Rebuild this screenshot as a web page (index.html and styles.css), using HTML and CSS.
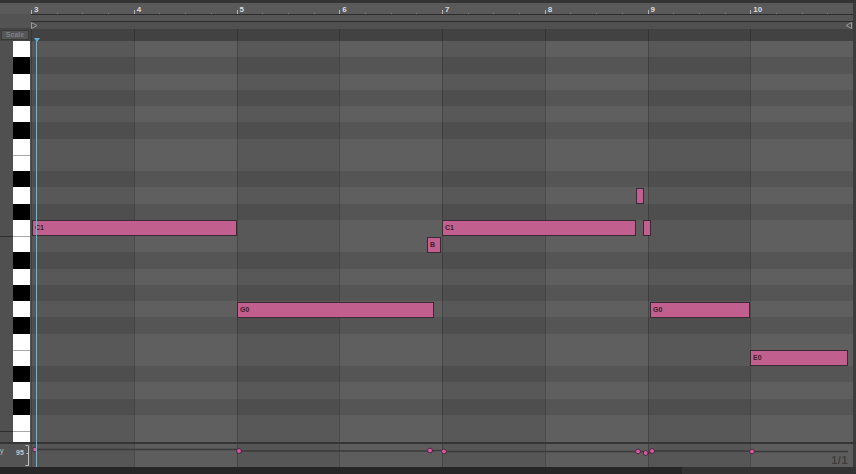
FILE: index.html
```html
<!DOCTYPE html>
<html>
<head>
<meta charset="utf-8">
<link rel="stylesheet" href="styles.css">
</head>
<body>
<div class="app">
  <div class="topbar"></div>
  <div class="header">
    <div class="hleft">
      <div class="hl-ruler"></div>
      <div class="hl-mid"></div>
      <div class="hl-scale"><span class="scale-btn">Scale</span></div>
    </div>
    <div class="hright">
      <div class="ruler">
        <div class="rbar"><span>3</span></div>
        <div class="rbar"><span>4</span></div>
        <div class="rbar"><span>5</span></div>
        <div class="rbar"><span>6</span></div>
        <div class="rbar"><span>7</span></div>
        <div class="rbar"><span>8</span></div>
        <div class="rbar"><span>9</span></div>
        <div class="rbar"><span>10</span></div>
      </div>
      <div class="loopbar"></div>
      <div class="markrow">
        <svg class="tri-l" width="7" height="7" viewBox="0 0 7 7"><path d="M0.5 0.5 L6 3.5 L0.5 6.5 Z" fill="none" stroke="#9a9a9a" stroke-width="1"/></svg>
        <svg class="tri-r" width="7" height="7" viewBox="0 0 7 7"><path d="M6.5 0.5 L1 3.5 L6.5 6.5 Z" fill="none" stroke="#9a9a9a" stroke-width="1"/></svg>
      </div>
      <div class="cols darkrow">
        <div class="c"></div><div class="c"></div><div class="c"></div><div class="c"></div>
        <div class="c"></div><div class="c"></div><div class="c"></div><div class="c"></div>
      </div>
    </div>
    <div class="hedge"></div>
  </div>

  <div class="main">
    <div class="keyscol">
      <div class="panel">
        <div class="pr"></div><div class="pr"></div><div class="pr"></div><div class="pr"></div><div class="pr"></div><div class="pr"></div>
        <div class="pr"></div><div class="pr"></div><div class="pr"></div><div class="pr"></div><div class="pr"></div><div class="pr"></div>
        <div class="pr oct"></div><div class="pr"></div><div class="pr"></div><div class="pr"></div><div class="pr"></div><div class="pr"></div>
        <div class="pr"></div><div class="pr"></div><div class="pr"></div><div class="pr"></div><div class="pr"></div><div class="pr"></div>
        <div class="pr oct"></div>
      </div>
      <div class="keys">
        <div class="k w"></div><div class="k b"></div><div class="k w"></div><div class="k b"></div><div class="k w"></div><div class="k b"></div>
        <div class="k w"></div><div class="k w sep"></div><div class="k b"></div><div class="k w"></div><div class="k b"></div><div class="k w"></div>
        <div class="k w sep"></div><div class="k b"></div><div class="k w"></div><div class="k b"></div><div class="k w"></div><div class="k b"></div>
        <div class="k w"></div><div class="k w sep"></div><div class="k b"></div><div class="k w"></div><div class="k b"></div><div class="k w"></div>
        <div class="k w sep"></div>
      </div>
      <div class="keygap"></div>
    </div>

    <div class="grid">
      <div class="rows">
        <div class="r w"></div><div class="r b"></div><div class="r w"></div><div class="r b"></div><div class="r w"></div><div class="r b"></div>
        <div class="r w"></div><div class="r w"></div><div class="r b"></div><div class="r w"></div><div class="r b"></div><div class="r w"></div>
        <div class="r w"></div><div class="r b"></div><div class="r w"></div><div class="r b"></div><div class="r w"></div><div class="r b"></div>
        <div class="r w"></div><div class="r w"></div><div class="r b"></div><div class="r w"></div><div class="r b"></div><div class="r w"></div>
        <div class="r w"></div>
      </div>
      <div class="cols overlay">
        <div class="c"></div><div class="c lt"></div><div class="c"></div><div class="c lt"></div>
        <div class="c"></div><div class="c lt"></div><div class="c"></div><div class="c lt"></div>
      </div>
      <div class="note" style="left:1px;top:179px;width:205px"><span>C1</span></div>
      <div class="note" style="left:206px;top:261px;width:197px"><span>G0</span></div>
      <div class="note" style="left:396px;top:196px;width:14px"><span>B</span></div>
      <div class="note" style="left:411px;top:179px;width:194px"><span>C1</span></div>
      <div class="note" style="left:605px;top:147px;width:8px"></div>
      <div class="note" style="left:612px;top:179px;width:8px"></div>
      <div class="note" style="left:619px;top:261px;width:100px"><span>G0</span></div>
      <div class="note" style="left:719px;top:309px;width:98px"><span>E0</span></div>
    </div>
    <div class="medge"></div>
  </div>

  <div class="vsep"></div>

  <div class="vel">
    <div class="vleft">
      <span class="vname">y</span>
      <span class="vval">95</span>
      <svg class="vbracket" width="5" height="23" viewBox="0 0 5 23">
        <path d="M0.5 1.5 H3.5 V21.5 H0.5 M1.5 9.5 H3.5" fill="none" stroke="#bdbdbd" stroke-width="1"/>
      </svg>
    </div>
    <div class="vlane">
      <div class="cols overlay">
        <div class="c"></div><div class="c lt"></div><div class="c"></div><div class="c lt"></div>
        <div class="c"></div><div class="c lt"></div><div class="c"></div><div class="c lt"></div>
      </div>
      <svg class="vsvg" width="822" height="23" viewBox="0 0 822 23">
        <g stroke="#3a3a3a" stroke-width="1.3" fill="none">
          <path d="M4 5.5 H206"/>
          <path d="M208 7 H403"/>
          <path d="M399 6.5 H410"/>
          <path d="M413 7.5 H605"/>
          <path d="M607 7.5 H613"/>
          <path d="M614.7 9 H620"/>
          <path d="M621 7 H719"/>
          <path d="M721 7.5 H817"/>
        </g>
        <g fill="#dc58a2" stroke="#402634" stroke-width="0.9">
          <circle cx="4" cy="5.5" r="2.4"/>
          <circle cx="208" cy="7" r="2.4"/>
          <circle cx="399" cy="6.5" r="2.4"/>
          <circle cx="413" cy="7.5" r="2.4"/>
          <circle cx="607" cy="7.5" r="2.4"/>
          <circle cx="614.7" cy="9" r="2.4"/>
          <circle cx="621" cy="7" r="2.4"/>
          <circle cx="721" cy="7.5" r="2.4"/>
        </g>
      </svg>
      <span class="pager">1/1</span>
    </div>
    <div class="medge"></div>
  </div>

  <div class="bottom"><div class="scroll"></div></div>

  <div class="playhead"></div>
  <svg class="phead" width="6" height="4" viewBox="0 0 6 4"><path d="M0 0 H6 L3 4 Z" fill="#5fb3dc"/></svg>
</div>
</body>
</html>
```

FILE: styles.css
```css
html, body {
  margin: 0;
  padding: 0;
}
body {
  width: 856px;
  height: 474px;
  overflow: hidden;
  background: #2b2b2b;
  font-family: "Liberation Sans", Arial, sans-serif;
}
.app {
  position: relative;
  width: 856px;
  height: 474px;
  display: flex;
  flex-direction: column;
}
.topbar {
  height: 3px;
  background: #343434;
}

/* header */
.header {
  height: 38px;
  display: flex;
}
.hleft {
  width: 31px;
  display: flex;
  flex-direction: column;
}
.hl-ruler {
  height: 11px;
  background: #5a5a5a;
}
.hl-mid {
  height: 14px;
  background: #535353;
}
.hl-scale {
  height: 13px;
  background: #444444;
  display: flex;
  align-items: center;
  padding-left: 1px;
}
.scale-btn {
  display: block;
  width: 26px;
  height: 8px;
  background: #555555;
  border: 1px solid #3a3a3a;
  color: #808080;
  font-size: 7px;
  font-weight: bold;
  line-height: 8px;
  text-align: center;
}
.hright {
  width: 822px;
  display: flex;
  flex-direction: column;
}
.hedge {
  width: 3px;
  background: #3c3c3c;
}
.ruler {
  height: 11px;
  display: flex;
  background: #5a5a5a;
  border-bottom: 1px solid #2c2c2c;
}
.rbar {
  width: 102.75px;
  flex: none;
  box-sizing: border-box;
  padding-left: 3px;
  background-image:
    linear-gradient(#b5b5b5, #b5b5b5),
    linear-gradient(#858585, #858585),
    linear-gradient(#858585, #858585),
    linear-gradient(#858585, #858585);
  background-repeat: no-repeat;
  background-size: 1px 4px, 1px 1px, 1px 1px, 1px 1px;
  background-position: 0 100%, 25.7px 100%, 51.4px 100%, 77px 100%;
}
.rbar span {
  display: block;
  color: #dcdcdc;
  font-size: 8px;
  font-weight: bold;
  line-height: 11px;
  padding-top: 1px;
}
.loopbar {
  height: 6px;
  background: #555555;
  border-bottom: 1px solid #2c2c2c;
}
.markrow {
  height: 7px;
  background: #505050;
  display: flex;
  justify-content: space-between;
  align-items: center;
  padding-right: 1px;
}
.tri-l, .tri-r {
  display: block;
}
.darkrow {
  height: 12px;
  background: #424242;
}

/* column bands */
.cols {
  display: flex;
}
.cols .c {
  width: 102.75px;
  flex: none;
  box-sizing: border-box;
  border-left: 1px solid rgba(0, 0, 0, 0.2);
}
.cols .c.lt {
  background: rgba(255, 255, 255, 0.045);
}
.overlay {
  position: absolute;
  left: 0;
  top: 0;
  bottom: 0;
  width: 822px;
}

/* main */
.main {
  height: 401px;
  display: flex;
  overflow: hidden;
}
.keyscol {
  width: 31px;
  display: flex;
  background: #505050;
}
.panel {
  width: 13px;
  display: flex;
  flex-direction: column;
}
.pr {
  height: 16.25px;
  flex: none;
  box-sizing: border-box;
}
.pr.oct {
  border-top: 1px solid #2e2e2e;
}
.keys {
  width: 17px;
  display: flex;
  flex-direction: column;
}
.k {
  height: 16.25px;
  flex: none;
  box-sizing: border-box;
}
.k.w {
  background: #ffffff;
}
.k.b {
  background: #000000;
}
.k.sep {
  border-top: 1px solid #a8a8a8;
}
.keygap {
  width: 1px;
  background: #555555;
}
.grid {
  position: relative;
  width: 822px;
  overflow: hidden;
}
.rows {
  display: flex;
  flex-direction: column;
}
.r {
  height: 16.25px;
  flex: none;
}
.r.w {
  background: #585858;
}
.r.b {
  background: #4e4e4e;
}
.medge {
  width: 3px;
  background: #3c3c3c;
}

.note {
  position: absolute;
  height: 16px;
  box-sizing: border-box;
  background: #c1608f;
  border: 1px solid #3b2a34;
  display: flex;
  align-items: center;
  overflow: hidden;
}
.note span {
  padding-left: 2px;
  font-size: 7px;
  font-weight: bold;
  color: #3d1d2d;
  line-height: 8px;
}

/* velocity */
.vsep {
  height: 2px;
  background: #353535;
}
.vel {
  height: 23px;
  display: flex;
}
.vleft {
  width: 31px;
  background: #545454;
  display: flex;
  align-items: flex-start;
  position: relative;
}
.vname {
  position: absolute;
  left: 0;
  top: 3px;
  color: #bdbdbd;
  font-size: 7px;
  line-height: 8px;
}
.vval {
  position: absolute;
  left: 16px;
  top: 5px;
  color: #c8c8c8;
  font-size: 7px;
  font-weight: bold;
  line-height: 8px;
}
.vbracket {
  position: absolute;
  left: 25px;
  top: 0;
}
.vlane {
  position: relative;
  width: 822px;
  background: #565656;
}
.vsvg {
  position: absolute;
  left: 0;
  top: 0;
}
.pager {
  position: absolute;
  right: 5px;
  top: 11px;
  color: #3e3e3e;
  font-size: 11px;
  font-weight: bold;
  line-height: 11px;
  letter-spacing: 0.5px;
}

.bottom {
  height: 7px;
  background: #333333;
  display: flex;
}
.scroll {
  width: 682px;
  background: #262626;
}

.playhead {
  position: absolute;
  left: 36px;
  top: 41px;
  width: 1px;
  height: 426px;
  background: #7fb0c4;
}
.phead {
  position: absolute;
  left: 33.5px;
  top: 38px;
}
```
